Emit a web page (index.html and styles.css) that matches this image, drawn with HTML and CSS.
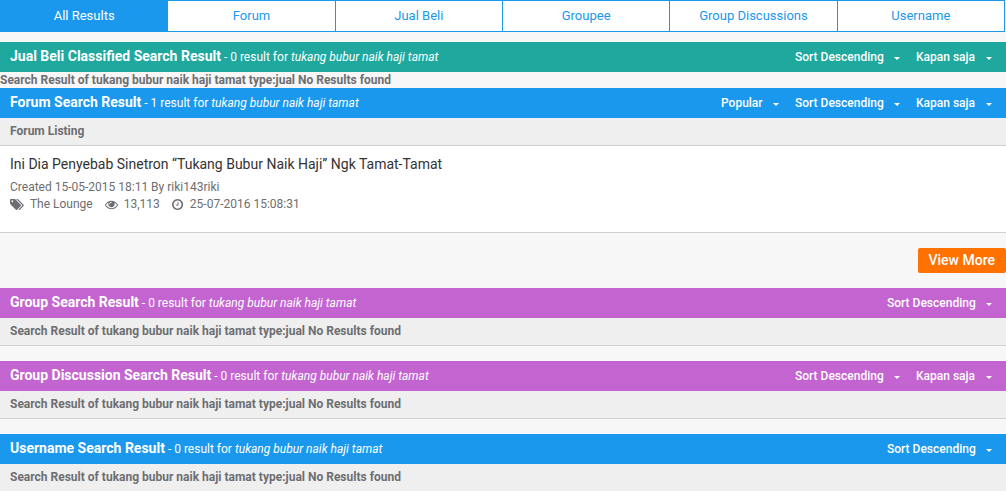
FILE: index.html
```html
<!DOCTYPE html>
<html lang="id">
<head>
<meta charset="utf-8">
<title>Search Result</title>
<meta name="viewport" content="width=device-width, initial-scale=1">
<link rel="stylesheet" href="styles.css">
</head>
<body>
<nav class="tabs">
  <a class="tab tab-active" href="#all">All Results</a>
  <a class="tab" href="#forum">Forum</a>
  <a class="tab" href="#jualbeli">Jual Beli</a>
  <a class="tab" href="#groupee">Groupee</a>
  <a class="tab" href="#discussions">Group Discussions</a>
  <a class="tab" href="#username">Username</a>
</nav>
<main>
  <section id="jualbeli">
    <header class="bar bar-teal">
      <div class="bar-title"><h2>Jual Beli Classified Search Result</h2> - 0 result for <em>tukang bubur naik haji tamat</em></div>
      <div class="filters">
        <span class="filter"><select aria-label="Sort order"><option>Sort Descending</option></select></span>
        <span class="filter"><select aria-label="Time range"><option>Kapan saja</option></select></span>
      </div>
    </header>
    <p class="plain">Search Result of tukang bubur naik haji tamat type:jual No Results found</p>
  </section>

  <section id="forum" class="section">
    <header class="bar bar-blue">
      <div class="bar-title"><h2>Forum Search Result</h2> - 1 result for <em>tukang bubur naik haji tamat</em></div>
      <div class="filters">
        <span class="filter"><select aria-label="Sort by"><option>Popular</option></select></span>
        <span class="filter"><select aria-label="Sort order"><option>Sort Descending</option></select></span>
        <span class="filter"><select aria-label="Time range"><option>Kapan saja</option></select></span>
      </div>
    </header>
    <h3 class="strip">Forum Listing</h3>
    <article class="thread">
      <a class="thread-title" href="#thread">Ini Dia Penyebab Sinetron “Tukang Bubur Naik Haji” Ngk Tamat-Tamat</a>
      <p class="meta">Created 15-05-2015 18:11 By <a href="#user">riki143riki</a></p>
      <div class="meta meta-row">
        <span class="meta-item"><svg class="icon" viewBox="0 0 1920 1792" aria-hidden="true"><path d="M448 448q0-53-37.500-90.500t-90.500-37.500-90.500 37.500-37.500 90.500 37.500 90.500 90.500 37.500 90.500-37.500 37.500-90.500zm1067 576q0 53-37 90l-491 492q-39 37-91 37-53 0-90-37l-715-716q-38-37-64.500-101t-26.500-117v-416q0-52 38-90t90-38h416q53 0 117 26.500t102 64.500l715 714q37 39 37 91zm384 0q0 53-37 90l-491 492q-39 37-91 37-36 0-59-14t-53-45l470-470q37-37 37-90 0-52-37-91l-715-714q-38-38-102-64.500t-117-26.500h224q53 0 117 26.500t102 64.500l715 714q37 39 37 91z"/></svg>The Lounge</span>
        <span class="meta-item"><svg class="icon" viewBox="0 0 1792 1792" aria-hidden="true"><path d="M1664 960q-152-236-381-353 61 104 61 225 0 185-131.500 316.500t-316.500 131.500-316.500-131.500-131.500-316.500q0-121 61-225-229 117-381 353 133 205 333.500 326.500t434.500 121.500 434.500-121.500 333.500-326.500zm-720-384q0-20-14-34t-34-14q-125 0-214.500 89.500t-89.500 214.500q0 20 14 34t34 14 34-14 14-34q0-86 61-147t147-61q20 0 34-14t14-34zm848 384q0 34-20 69-140 230-376.500 368.500t-499.500 138.500-499.500-139-376.500-368q-20-35-20-69t20-69q140-229 376.500-368t499.500-139 499.500 139 376.500 368q20 35 20 69z"/></svg>13,113</span>
        <span class="meta-item"><svg class="icon" viewBox="128 0 1664 1792" aria-hidden="true"><path d="M1024 544v448q0 14-9 23t-23 9h-320q-14 0-23-9t-9-23v-64q0-14 9-23t23-9h224v-352q0-14 9-23t23-9h64q14 0 23 9t9 23zm416 352q0-148-73-273t-198-198-273-73-273 73-198 198-73 273 73 273 198 198 273 73 273-73 198-198 73-273zm224 0q0 209-103 385.500t-279.500 279.500-385.500 103-385.500-103-279.500-279.500-103-385.500 103-385.500 279.500-279.500 385.500-103 385.500 103 279.500 279.500 103 385.500z"/></svg>25-07-2016 15:08:31</span>
      </div>
    </article>
    <div class="more"><button class="more-button" type="button">View More</button></div>
  </section>

  <section id="groupee" class="section">
    <header class="bar bar-purple">
      <div class="bar-title"><h2>Group Search Result</h2> - 0 result for <em>tukang bubur naik haji tamat</em></div>
      <div class="filters">
        <span class="filter"><select aria-label="Sort order"><option>Sort Descending</option></select></span>
      </div>
    </header>
    <p class="strip">Search Result of tukang bubur naik haji tamat type:jual No Results found</p>
  </section>

  <section id="discussions" class="section">
    <header class="bar bar-purple">
      <div class="bar-title"><h2>Group Discussion Search Result</h2> - 0 result for <em>tukang bubur naik haji tamat</em></div>
      <div class="filters">
        <span class="filter"><select aria-label="Sort order"><option>Sort Descending</option></select></span>
        <span class="filter"><select aria-label="Time range"><option>Kapan saja</option></select></span>
      </div>
    </header>
    <p class="strip">Search Result of tukang bubur naik haji tamat type:jual No Results found</p>
  </section>

  <section id="username">
    <header class="bar bar-blue">
      <div class="bar-title"><h2>Username Search Result</h2> - 0 result for <em>tukang bubur naik haji tamat</em></div>
      <div class="filters">
        <span class="filter"><select aria-label="Sort order"><option>Sort Descending</option></select></span>
      </div>
    </header>
    <p class="strip">Search Result of tukang bubur naik haji tamat type:jual No Results found</p>
  </section>
</main>
</body>
</html>
```
FILE: styles.css
```css
* {
  box-sizing: border-box;
}

html {
  scrollbar-width: none;
}

body {
  margin: 0;
  background: #f7f7f7;
  color: #6d6e71;
  font: 12px/16px Roboto, sans-serif;
}

h2, h3, p {
  margin: 0;
}

a {
  color: inherit;
  text-decoration: none;
}

.tabs {
  display: flex;
  margin: 0 1px 10px 0;
  border: 1px solid #1998ed;
  background: #fff;
}

.tab {
  flex: 1;
  border-right: 1px solid #1998ed;
  color: #1998ed;
  font-size: 13px;
  line-height: 30px;
  text-align: center;
}

.tab:last-child {
  border-right: 0;
}

.tab-active {
  background: #1998ed;
  color: #fff;
}

.section {
  margin-bottom: 15px;
}

.bar {
  display: flex;
  justify-content: space-between;
  align-items: center;
  height: 30px;
  padding: 0 14px 0 10px;
  color: #fff;
}

.bar-teal {
  background: #1ea89e;
}

.bar-blue {
  background: #1998ed;
}

.bar-purple {
  background: #c364d1;
}

.bar-title {
  padding-bottom: 1px;
}

.bar h2 {
  display: inline;
  font-size: 14px;
  font-weight: 700;
}

.filters {
  display: flex;
  gap: 16px;
}

.filter {
  display: flex;
  align-items: center;
}

.filter::after {
  content: "";
  margin-top: 2px;
  border: 3px solid transparent;
  border-top-color: #fff;
  border-bottom: 0;
}

.filter select {
  appearance: none;
  margin: 0;
  padding: 0 10px 0 0;
  border: 0;
  background: none;
  color: #fff;
  font: 500 12px/16px Roboto, sans-serif;
}

.plain {
  font-weight: 700;
}

.strip {
  padding: 5px 10px 6px;
  border-bottom: 1px solid #d1d1d1;
  background: #efefef;
  font-size: 12px;
  font-weight: 700;
}

.thread {
  padding: 8px 10px 19px;
  border-bottom: 1px solid #d1d1d1;
  background: #fff;
}

.thread-title {
  display: block;
  margin-bottom: 5px;
  color: #333;
  font-size: 14px;
  line-height: 20px;
}

.meta {
  line-height: 17px;
}

.meta-row {
  display: flex;
  gap: 12px;
}

.meta-item {
  display: flex;
  align-items: center;
  gap: 6px;
}

.icon {
  height: 13px;
  margin-bottom: 1px;
  fill: currentColor;
}

.more {
  display: flex;
  justify-content: flex-end;
  padding-top: 15px;
}

.more-button {
  padding: 0 11px;
  border: 0;
  border-radius: 2px;
  background: #ff7200;
  color: #fff;
  font: 500 14px/25px Roboto, sans-serif;
}
```
